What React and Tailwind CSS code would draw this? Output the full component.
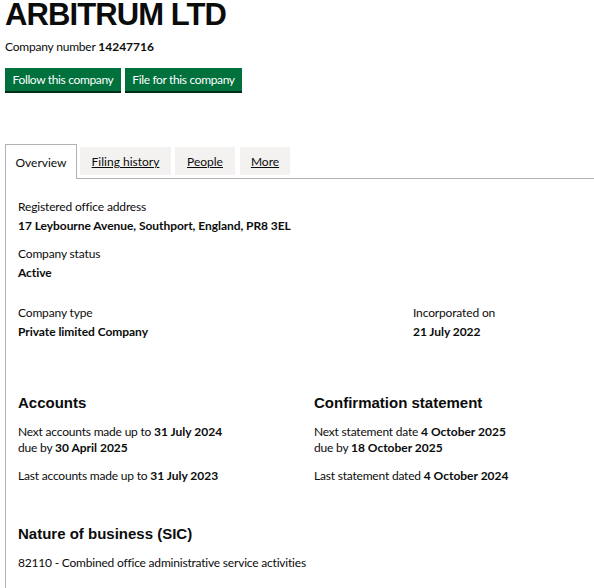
import React from "react";

const body = { fontFamily: "Lato, 'Liberation Sans', sans-serif" };
const head = { fontFamily: "'Liberation Sans', Arial, sans-serif" };

function Field({ label, value }) {
  return (
    <div>
      <div className="text-[12px] leading-[16px] tracking-[-0.15px]">{label}</div>
      <div className="mt-[3px] text-[12px] font-bold leading-[16px] tracking-[-0.05px]">{value}</div>
    </div>
  );
}

const txt = "text-[12px] leading-[16px] tracking-[-0.2px]";

export default function App() {
  return (
    <div className="min-h-[588px] overflow-hidden bg-white pl-[5px] text-[#0b0c0c]" style={body}>
      <h1 className="-my-[2px] text-[31px] font-bold leading-[34px] tracking-[-0.9px]" style={head}>
        ARBITRUM LTD
      </h1>
      <p className="mt-[8px] pt-[1px] text-[12px] leading-[16px] tracking-[-0.2px]">
        Company number <span className="font-bold tracking-normal">14247716</span>
      </p>
      <div className="mt-[13px] flex gap-[4px]">
        <button className="h-[23px] w-[116px] whitespace-nowrap bg-[#00703c] pt-[1px] text-[12px] leading-[22px] tracking-[-0.35px] text-white shadow-[0_2px_0_#002d18]">
          Follow this company
        </button>
        <button className="h-[23px] w-[117px] whitespace-nowrap bg-[#00703c] pt-[1px] text-[12px] leading-[22px] tracking-[-0.35px] text-white shadow-[0_2px_0_#002d18]">
          File for this company
        </button>
      </div>

      <div className="mt-[53px] flex h-[34px] items-start text-[12px]">
        <div className="relative z-10 -mb-px flex h-[35px] w-[72px] items-center justify-center border border-b-0 border-[#b1b4b6] bg-white pt-[1px]">
          Overview
        </div>
        <div className="ml-[3px] mt-[3px] flex h-[28px] w-[91px] items-center justify-center bg-[#f3f2f1] pt-[1px] underline">
          Filing history
        </div>
        <div className="ml-[4px] mt-[3px] flex h-[28px] w-[60px] items-center justify-center bg-[#f3f2f1] pt-[1px] underline">
          People
        </div>
        <div className="ml-[5px] mt-[3px] flex h-[28px] w-[50px] items-center justify-center bg-[#f3f2f1] pt-[1px] underline">
          More
        </div>
      </div>

      <div className="border-l border-t border-[#b1b4b6] pb-[20px] pl-[12px] pt-[20px]">
        <Field label="Registered office address" value="17 Leybourne Avenue, Southport, England, PR8 3EL" />
        <div className="mt-[12px]">
          <Field label="Company status" value="Active" />
        </div>
        <div className="mt-[24px] flex">
          <div className="w-[395px]">
            <Field label="Company type" value="Private limited Company" />
          </div>
          <Field label="Incorporated on" value="21 July 2022" />
        </div>

        <div className="mt-[53px] flex">
          <div className="w-[296px]">
            <h2 className="text-[15px] font-bold leading-[20px]" style={head}>Accounts</h2>
            <p className={`mt-[11px] ${txt}`}>
              Next accounts made up to <span className="font-bold tracking-normal">31 July 2024</span>
              <br />
              due by <span className="font-bold tracking-normal">30 April 2025</span>
            </p>
            <p className={`mt-[12px] ${txt}`}>
              Last accounts made up to <span className="font-bold tracking-normal">31 July 2023</span>
            </p>
          </div>
          <div>
            <h2 className="text-[15px] font-bold leading-[20px]" style={head}>Confirmation statement</h2>
            <p className={`mt-[11px] ${txt}`}>
              Next statement date <span className="font-bold tracking-normal">4 October 2025</span>
              <br />
              due by <span className="font-bold tracking-normal">18 October 2025</span>
            </p>
            <p className={`mt-[12px] ${txt}`}>
              Last statement dated <span className="font-bold tracking-normal">4 October 2024</span>
            </p>
          </div>
        </div>

        <h2 className="mt-[40px] text-[15px] font-bold leading-[20px]" style={head}>Nature of business (SIC)</h2>
        <p className={`mt-[11px] ${txt}`}>
          82110 - Combined office administrative service activities
        </p>
      </div>
    </div>
  );
}
